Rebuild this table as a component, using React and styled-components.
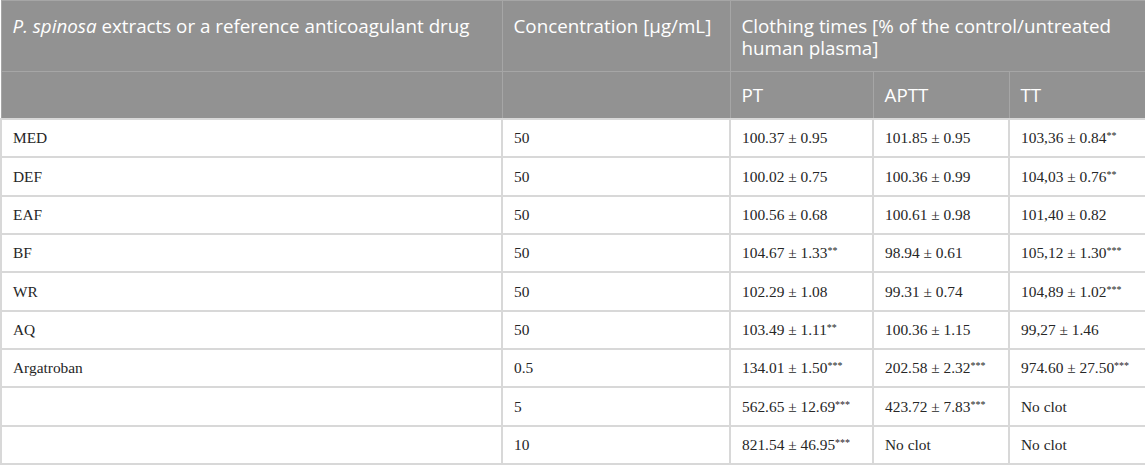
import React from "react";
import styled, { createGlobalStyle } from "styled-components";

const
	GlobalStyle = createGlobalStyle`
		html, body {
			margin: 0;
			padding: 0;
			background: #fff;
		}
	`,
	Table = styled.table`
		width: 1145px;
		border-collapse: collapse;
		table-layout: fixed;
	`,
	Col = styled.col`
		width: ${ p => p.$w }px;
	`,
	HeadCell = styled.th`
		background: #929292;
		color: #fff;
		font-family: "Open Sans", "Noto Sans", sans-serif;
		font-weight: 400;
		font-size: 18.8px;
		line-height: 22px;
		text-align: left;
		padding: ${ p => p.$top ? "14px 11px 6px" : "0 11px" };
		height: ${ p => p.$top ? "50px" : "46px" };
		vertical-align: ${ p => p.$top ? "top" : "middle" };
		border: 1px solid #a6a6a6;
		border-bottom-color: ${ p => p.$top ? "#a6a6a6" : "#cfcfcf" };
	`,
	Cell = styled.td`
		font-family: "Liberation Serif", "Times New Roman", serif;
		font-size: 15.4px;
		color: #262626;
		padding: 0 11px;
		height: 36.35px;
		vertical-align: middle;
		border: 2px solid #d8d8d8;
		white-space: nowrap;
	`,
	Stars = styled.sup`
		font-size: 10px;
		vertical-align: 4px;
		line-height: 0;
	`;

const widths = [ 501, 228, 143, 136, 137 ];

const rows = [
	[ "MED", "50", "100.37 ± 0.95", "101.85 ± 0.95", "103,36 ± 0.84**" ],
	[ "DEF", "50", "100.02 ± 0.75", "100.36 ± 0.99", "104,03 ± 0.76**" ],
	[ "EAF", "50", "100.56 ± 0.68", "100.61 ± 0.98", "101,40 ± 0.82" ],
	[ "BF", "50", "104.67 ± 1.33**", "98.94 ± 0.61", "105,12 ± 1.30***" ],
	[ "WR", "50", "102.29 ± 1.08", "99.31 ± 0.74", "104,89 ± 1.02***" ],
	[ "AQ", "50", "103.49 ± 1.11**", "100.36 ± 1.15", "99,27 ± 1.46" ],
	[ "Argatroban", "0.5", "134.01 ± 1.50***", "202.58 ± 2.32***", "974.60 ± 27.50***" ],
	[ "", "5", "562.65 ± 12.69***", "423.72 ± 7.83***", "No clot" ],
	[ "", "10", "821.54 ± 46.95***", "No clot", "No clot" ],
];

// split trailing significance stars into a superscript
const Value = ({ text }) => {
	const m = text.match( /^(.*?)(\*+)$/ );
	if ( !m ) return text;
	return <>{m[ 1 ]}<Stars>{m[ 2 ]}</Stars></>;
};

const App = () => (
	<>
		<GlobalStyle />
		<Table>
			<colgroup>
				{widths.map( ( w, i ) => <Col key={i} $w={w} /> )}
			</colgroup>
			<thead>
				<tr>
					<HeadCell $top><i>P. spinosa</i> extracts or a reference anticoagulant drug</HeadCell>
					<HeadCell $top>Concentration [µg/mL]</HeadCell>
					<HeadCell $top colSpan={3}>Clothing times [% of the control/untreated human plasma]</HeadCell>
				</tr>
				<tr>
					<HeadCell />
					<HeadCell />
					<HeadCell>PT</HeadCell>
					<HeadCell>APTT</HeadCell>
					<HeadCell>TT</HeadCell>
				</tr>
			</thead>
			<tbody>
				{rows.map( ( r, i ) => (
					<tr key={i}>
						{r.map( ( c, j ) => (
							<Cell key={j}><Value text={c} /></Cell>
						) )}
					</tr>
				) )}
			</tbody>
		</Table>
	</>
);

export default App;
